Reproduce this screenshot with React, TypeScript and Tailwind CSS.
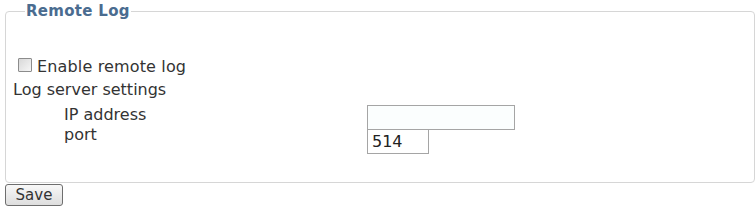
export default function App() {
  return (
    <div className="pl-[5px] pt-[4px] font-['DejaVu_Sans','Liberation_Sans',sans-serif] text-[16px] leading-[20px] text-[#333] bg-white w-[756px] h-[212px]">
      <fieldset className="w-[750px] h-[179px] border border-[#d6d6d6] rounded-[4px] pl-[6px]">
        <legend className="ml-[13px] px-[1px] font-bold text-[15px] tracking-[0.3px] text-[#4a6c90] leading-[15px]">Remote Log</legend>
        <div className="pt-[38px]">
          <label className="flex items-start gap-[5px] pl-[6px] h-[20px]">
            <span className="mt-[1px] w-[14px] h-[14px] border border-[#8c8c8c] bg-gradient-to-br from-[#d8d8d8] to-[#f6f6f6] rounded-[1px]" />
            <span className="tracking-[0.15px]">Enable remote log</span>
          </label>
          <div className="mt-[3px] pl-[1px]">Log server settings</div>
          <div className="mt-[5px] flex">
            <div className="w-[355px] pl-[52px] flex flex-col">
              <div>IP address</div>
              <div>port</div>
            </div>
            <div className="flex flex-col">
              <div className="w-[148px] h-[25px] border border-[#a5a5a5] bg-[#fbfefe]" />
              <div className="w-[62px] h-[24px] border border-t-0 border-[#a5a5a5] bg-white pl-[4px] leading-[23px] text-[16px] text-[#222]">514</div>
            </div>
          </div>
        </div>
      </fieldset>
      <button className="mt-[1px] w-[58px] h-[22px] border border-[#6e6e6e] rounded-[3px] bg-gradient-to-b from-[#f8f8f8] to-[#dedede] text-[15px] text-[#333] leading-[18px]">Save</button>
    </div>
  );
}
